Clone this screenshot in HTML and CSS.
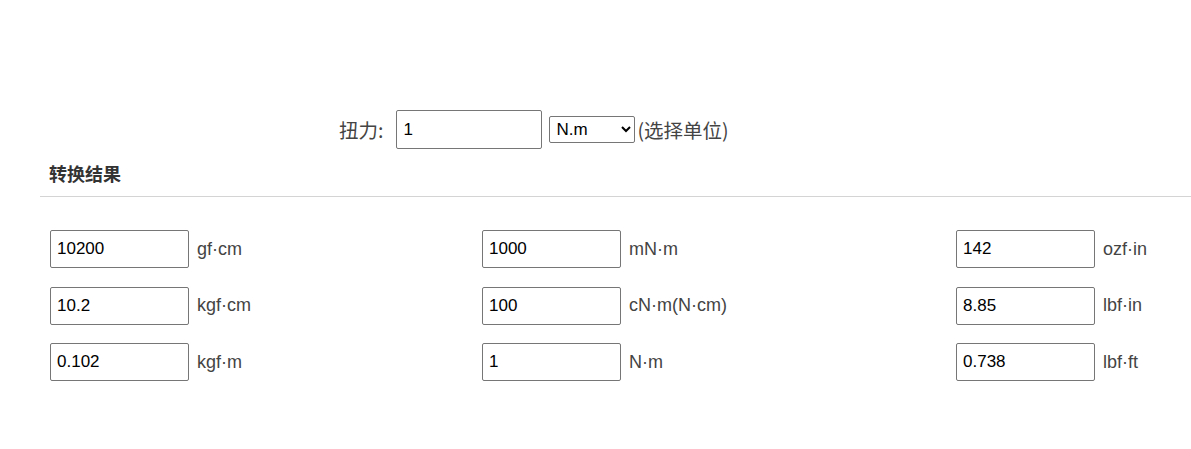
FILE: index.html
```html
<!DOCTYPE html>
<html lang="zh">
<head>
<meta charset="utf-8">
<link rel="stylesheet" href="styles.css">
</head>
<body>
<div class="page">
  <div class="query">
    <span class="q-label">扭力:</span>
    <input class="q-input" type="text" value="1">
    <select class="q-select">
      <option>N.m</option>
    </select>
    <span class="q-hint">(选择单位)</span>
  </div>
  <h3 class="title">转换结果</h3>
  <div class="rule"></div>
  <div class="grid">
    <div class="cell"><input class="val" type="text" value="10200"><span class="unit">gf·cm</span></div>
    <div class="cell"><input class="val" type="text" value="1000"><span class="unit">mN·m</span></div>
    <div class="cell"><input class="val" type="text" value="142"><span class="unit">ozf·in</span></div>
    <div class="cell"><input class="val" type="text" value="10.2"><span class="unit">kgf·cm</span></div>
    <div class="cell"><input class="val" type="text" value="100"><span class="unit">cN·m(N·cm)</span></div>
    <div class="cell"><input class="val" type="text" value="8.85"><span class="unit">lbf·in</span></div>
    <div class="cell"><input class="val" type="text" value="0.102"><span class="unit">kgf·m</span></div>
    <div class="cell"><input class="val" type="text" value="1"><span class="unit">N·m</span></div>
    <div class="cell"><input class="val" type="text" value="0.738"><span class="unit">lbf·ft</span></div>
  </div>
</div>
</body>
</html>
```

FILE: styles.css
```css
html, body {
  margin: 0;
  padding: 0;
  background: #fff;
}

.page {
  font-family: "Liberation Sans", "Noto Sans CJK SC", sans-serif;
  color: #333;
  padding-top: 110px;
}

.query {
  display: flex;
  align-items: center;
  padding-left: 339px;
  height: 39px;
  font-family: "Noto Sans CJK SC", sans-serif;
  font-size: 19.5px;
  color: #444;
}

.q-label {
  margin-right: 13px;
}

.q-input {
  box-sizing: border-box;
  width: 146px;
  height: 39px;
  border: 1px solid #767676;
  border-radius: 2px;
  padding: 0 6px;
  font-family: "Liberation Sans", sans-serif;
  font-size: 17px;
  color: #000;
  margin: 0;
}

.q-select {
  box-sizing: border-box;
  width: 86px;
  height: 27px;
  margin: 0 2px 0 7px;
  border: 1px solid #767676;
  border-radius: 2px;
  font-family: "Liberation Sans", sans-serif;
  font-size: 17px;
  color: #000;
  background: #fff;
  padding: 0 2px;
}

.title {
  margin: 9px 0 0 49px;
  font-family: "Noto Sans CJK SC", sans-serif;
  font-size: 18px;
  font-weight: bold;
  color: #333;
  height: 30px;
  line-height: 30px;
}

.rule {
  margin: 8px 0 0 40px;
  height: 1px;
  background: #d4d4d4;
}

.grid {
  display: grid;
  grid-template-columns: 432px 474px auto;
  row-gap: 18.5px;
  padding: 33px 0 0 50px;
}

.cell {
  display: flex;
  align-items: center;
  gap: 8px;
}

.val {
  box-sizing: border-box;
  width: 139px;
  height: 38px;
  margin: 0;
  border: 1px solid #767676;
  border-radius: 2px;
  padding: 0 6px;
  font-family: "Liberation Sans", sans-serif;
  font-size: 17px;
  color: #000;
}

.unit {
  font-size: 18px;
  color: #444;
}
```
